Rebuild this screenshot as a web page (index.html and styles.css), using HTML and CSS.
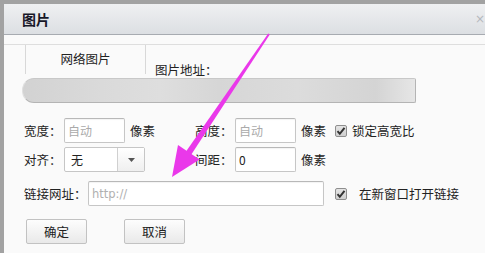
FILE: index.html
```html
<!DOCTYPE html>
<html lang="zh-CN">
<head>
<meta charset="utf-8">
<title>图片</title>
<link rel="stylesheet" href="styles.css">
</head>
<body>
<div class="page">
  <div class="dialog">
    <div class="titlebar">
      <span class="title">图片</span>
      <span class="close">×</span>
    </div>
    <div class="tabrow">
      <div class="tab">网络图片</div>
      <div class="urllabel">图片地址：</div>
    </div>
    <div class="blurred"></div>
    <div class="row row1">
      <span class="label">宽度：</span>
      <span class="input small placeholder">自动</span>
      <span class="unit">像素</span>
      <span class="label">高度：</span>
      <span class="input small placeholder">自动</span>
      <span class="unit unit2">像素</span>
      <span class="check"><svg width="12" height="12" viewBox="0 0 12 12"><path d="M2.5 6.2 L4.8 8.8 L9.5 2.8" fill="none" stroke="#333" stroke-width="2"/></svg></span>
      <span class="checklabel">锁定高宽比</span>
    </div>
    <div class="row row2">
      <span class="label">对齐：</span>
      <span class="select"><span class="selval">无</span><span class="selbtn"><svg width="7" height="4" viewBox="0 0 7 4"><path d="M0 0 H7 L3.5 4 Z" fill="#555"/></svg></span></span>
      <span class="label">间距：</span>
      <span class="input small">0</span>
      <span class="unit unit2">像素</span>
    </div>
    <div class="row row3">
      <span class="label wide">链接网址：</span>
      <span class="input long placeholder latin">http://</span>
      <span class="check check2"><svg width="12" height="12" viewBox="0 0 12 12"><path d="M2.5 6.2 L4.8 8.8 L9.5 2.8" fill="none" stroke="#333" stroke-width="2"/></svg></span>
      <span class="checklabel cl2">在新窗口打开链接</span>
    </div>
    <div class="buttons">
      <span class="btn">确定</span>
      <span class="btn">取消</span>
    </div>
  </div>
  <svg class="arrow" width="485" height="253" viewBox="0 0 485 253">
    <polygon points="269.8,34.6 268.2,33.4 185.5,152.3 190.5,155.7" fill="#ea38ea"/>
    <polygon points="172,177 178,144.9 199.6,159.5" fill="#ea38ea"/>
  </svg>
</div>
</body>
</html>
```

FILE: styles.css
```css
* { box-sizing: border-box; }
html, body { margin: 0; padding: 0; }
body {
  width: 485px;
  height: 253px;
  overflow: hidden;
  font-family: "Noto Sans CJK SC", "Noto Sans", sans-serif;
  font-size: 12px;
  color: #222;
}
.page {
  position: relative;
  width: 485px;
  height: 253px;
  background: #a2a2a2;
  padding: 4px 0 0 4px;
}
.dialog {
  height: 249px;
  background: #fafafa;
  display: flex;
  flex-direction: column;
}
.titlebar {
  height: 31px;
  flex: none;
  background: linear-gradient(#eff0f2, #dcdfe3);
  border-bottom: 1px solid #a7abb1;
  display: flex;
  align-items: center;
  padding-left: 18px;
}
.title {
  font-size: 14px;
  font-weight: bold;
  color: #181828;
  line-height: 16px;
}
.close {
  margin-left: auto;
  margin-right: 0;
  color: #b5b8bd;
  font-size: 12px;
  line-height: 16px;
  font-family: "DejaVu Sans", sans-serif;
}
.tabrow {
  margin-top: 9px;
  height: 34px;
  border-top: 1px solid #dedede;
  display: flex;
  align-items: flex-end;
  padding-left: 21px;
}
.tab {
  align-self: stretch;
  width: 121px;
  margin-bottom: 4px;
  border-left: 1px solid #d8d8d8;
  border-right: 1px solid #d8d8d8;
  text-align: center;
  padding-top: 6px;
  line-height: 16px;
  font-size: 12.5px;
}
.urllabel {
  margin-left: 9px;
  line-height: 16px;
  font-size: 12.5px;
}
.blurred {
  margin-left: 18px;
  width: 394px;
  height: 25px;
  flex: none;
  border: 1px solid #b4b4b4;
  border-left-color: #e0e0e0;
  border-top-color: #c8c8c8;
  border-radius: 12px 2px 2px 12px;
  background: linear-gradient(90deg, #d2d2d2 0%, #dadada 20%, #dedede 35%, #d6d6d6 50%, #dcdcdc 70%, #d4d4d4 90%, #e6e6e6 100%);
  filter: blur(0.6px);
}
.row {
  display: flex;
  align-items: center;
  padding-left: 20px;
  height: 25px;
  flex: none;
}
.row1 { margin-top: 15px; }
.row2 { margin-top: 4px; }
.row3 { margin-top: 9px; }
.label {
  width: 40px;
  line-height: 16px;
  font-size: 12.5px;
}
.label.wide { width: 64px; }
.input {
  height: 25px;
  background: #fff;
  border: 1px solid #c6c6c6;
  border-top-color: #b8b8b8;
  border-radius: 2px;
  box-shadow: inset 0 1px 1px rgba(0,0,0,0.05);
  padding-left: 3px;
  display: flex;
  align-items: center;
  line-height: 16px;
  color: #222;
}
.input.small { width: 61px; }
.input.long { width: 236px; }
.placeholder { color: #aaa; }
.latin { font-family: "DejaVu Sans", "Liberation Sans", sans-serif; font-size: 11.5px; color: #b0b0b0; }
.unit {
  width: 70px;
  padding-left: 5px;
  line-height: 16px;
  font-size: 12.5px;
}
.unit2 { width: 39px; }
.check {
  width: 12px;
  height: 12px;
  border: 1px solid #8e8e8e;
  border-radius: 2px;
  background: linear-gradient(#e4e4e4, #cfcfcf);
  display: flex;
  align-items: center;
  justify-content: center;
}
.check svg { display: block; margin: -1px; }
.check2 { margin-left: 11px; }
.checklabel {
  margin-left: 5px;
  line-height: 16px;
  font-size: 12.5px;
}
.cl2 { margin-left: 12px; }
.select {
  width: 81px;
  height: 25px;
  display: flex;
  background: #fff;
  border: 1px solid #c6c6c6;
  border-radius: 2px;
  margin-right: 50px;
}
.selval {
  flex: 1;
  padding-left: 6px;
  display: flex;
  align-items: center;
  line-height: 16px;
}
.selbtn {
  width: 27px;
  border-left: 1px solid #d0d0d0;
  background: linear-gradient(#ffffff, #efefef);
  display: flex;
  align-items: center;
  justify-content: center;
}
.selbtn svg { display: block; }
.buttons {
  display: flex;
  gap: 37px;
  padding-left: 22px;
  margin-top: 13px;
}
.btn {
  width: 61px;
  height: 25px;
  border: 1px solid #c2c2c2;
  border-radius: 2px;
  background: linear-gradient(#fdfdfd, #e9e9e9);
  display: flex;
  align-items: center;
  justify-content: center;
  line-height: 16px;
  font-size: 12.5px;
}
.arrow {
  position: absolute;
  left: 0;
  top: 0;
  pointer-events: none;
}
```
